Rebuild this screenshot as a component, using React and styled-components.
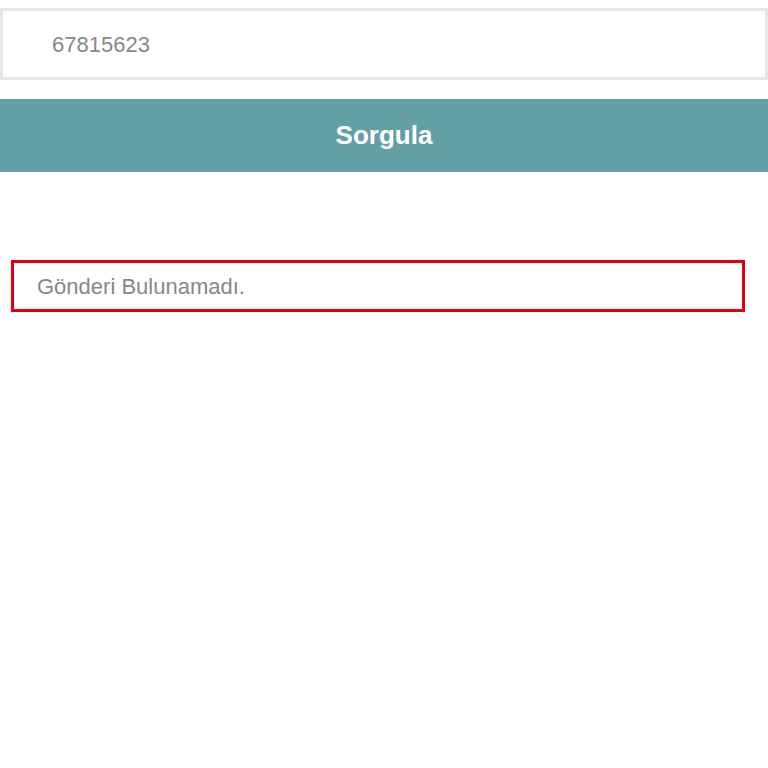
import React from 'react';
import styled, { createGlobalStyle } from 'styled-components';

const GlobalStyle = createGlobalStyle`
  body {
    margin: 0;
    background: #fff;
    font-family: "Liberation Sans", Arial, sans-serif;
  }
`;

const Page = styled.div`
  display: flex;
  flex-direction: column;
  padding-top: 8px;
`;

const TrackingInput = styled.input`
  box-sizing: border-box;
  width: 100%;
  height: 72px;
  margin: 0;
  padding: 2px 0 0 49px;
  border: 3px solid #e6e6e6;
  background: #fff;
  font-family: "Liberation Sans", Arial, sans-serif;
  font-size: 22px;
  color: #888;
  outline: none;
`;

const QueryButton = styled.button`
  height: 73px;
  margin-top: 19px;
  border: none;
  background: #63a0a5;
  color: #fff;
  font-family: "Liberation Sans", Arial, sans-serif;
  font-size: 26px;
  font-weight: bold;
  cursor: pointer;
`;

const Notice = styled.div`
  box-sizing: border-box;
  height: 52px;
  margin: 88px 23px 0 11px;
  padding: 2px 0 0 23px;
  display: flex;
  align-items: center;
  border: 3px solid #e0000b;
  color: #888;
  font-size: 22px;
`;

export default function App() {
  return (
    <>
      <GlobalStyle />
      <Page>
        <TrackingInput defaultValue="67815623" />
        <QueryButton>Sorgula</QueryButton>
        <Notice>Gönderi Bulunamadı.</Notice>
      </Page>
    </>
  );
}
